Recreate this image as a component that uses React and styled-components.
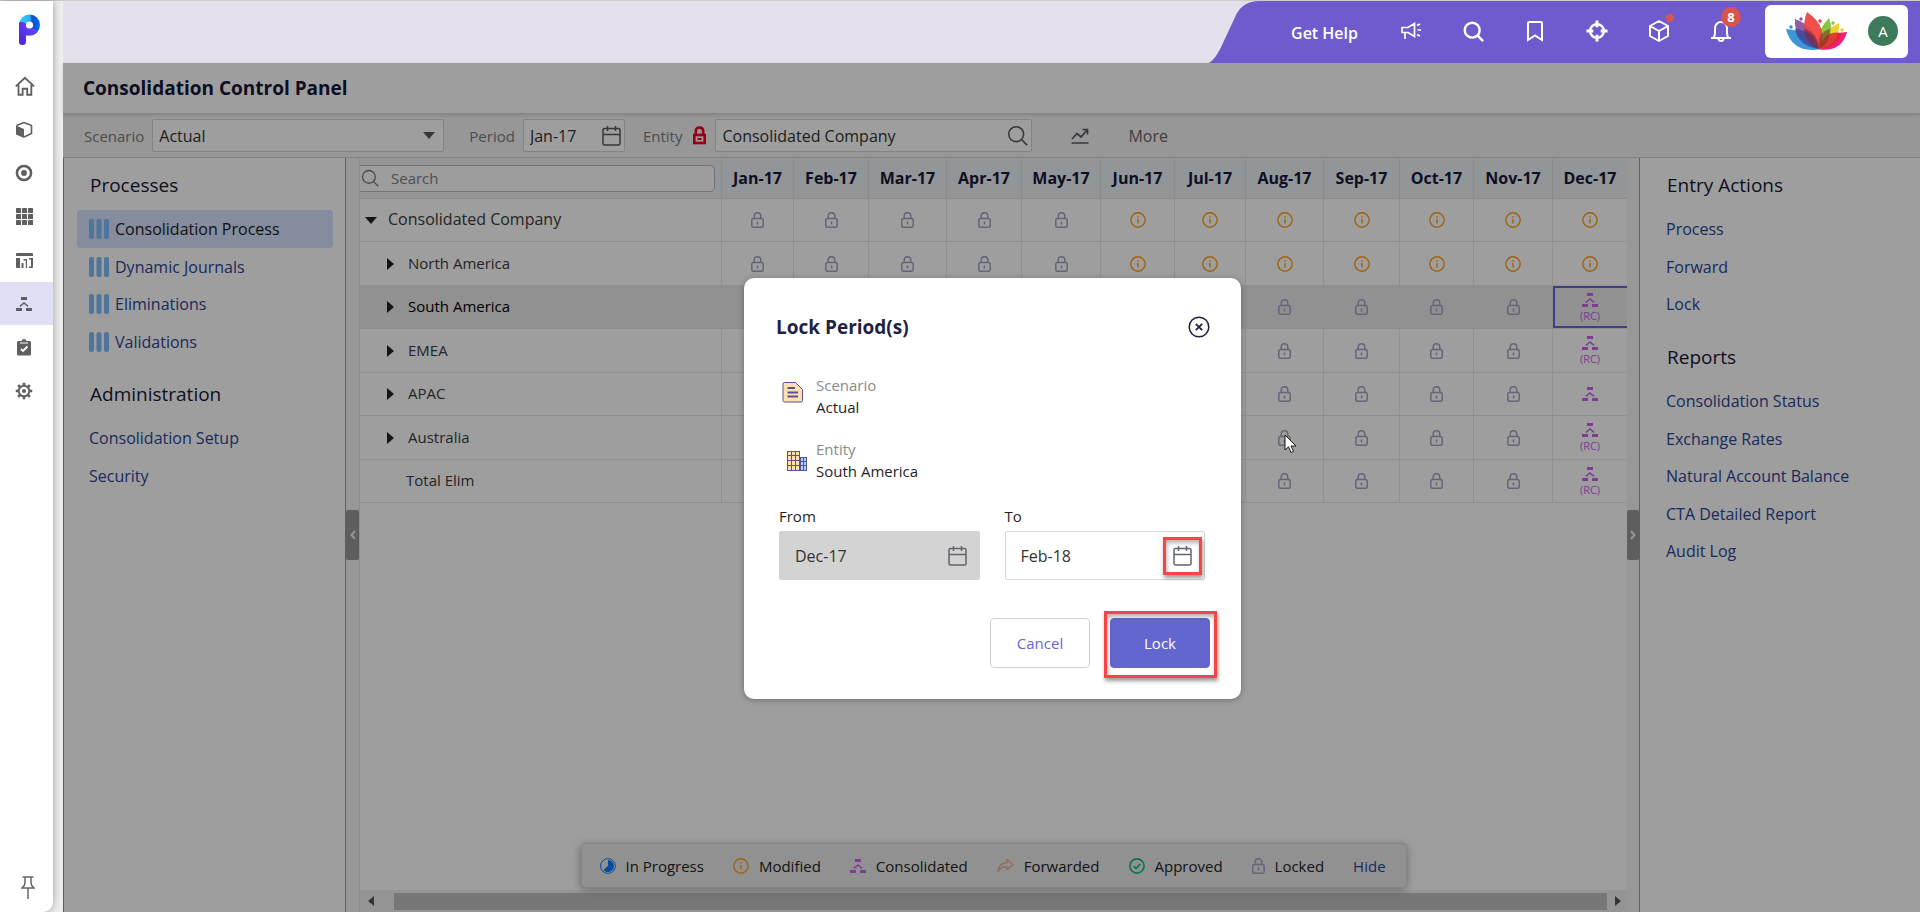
import { useState } from "react";
import styled, { createGlobalStyle, css } from "styled-components";

const GlobalStyle = createGlobalStyle`
  * {
    box-sizing: border-box;
  }
  body {
    margin: 0;
    background: #eeeeee;
    font-family: "Open Sans", "Noto Sans", sans-serif;
    font-size: 15px;
    color: #333333;
  }
  button, input, select {
    font: inherit;
    color: inherit;
  }
  button {
    background: none;
    border: none;
    padding: 0;
    cursor: pointer;
  }
  a {
    text-decoration: none;
  }
  svg {
    display: block;
    flex-shrink: 0;
  }
`;

const Page = styled.div`
  display: flex;
  min-height: 100vh;
  border-top: 1px solid #cccccc;
`;

/* side rail */

const Rail = styled.nav`
  width: 53px;
  display: flex;
  flex-direction: column;
  background: white;
  border-bottom-right-radius: 10px;
  box-shadow: 0 0 8px rgba(0, 0, 0, 0.35);
  z-index: 2;
`;

const Brand = styled.a`
  height: 63px;
  padding: 13px 0 0 19px;
`;

const RailButton = styled.button`
  height: 44px;
  padding-right: 5px;
  display: flex;
  align-items: center;
  justify-content: center;
  color: #5f5f5f;
  background: ${(props) => (props.$active ? "#dfdff5" : "transparent")};

  &:nth-of-type(even) {
    height: 43px;
  }
`;

const PinButton = styled.button`
  margin-top: auto;
  padding: 0 0 13px 21px;
  color: #666666;
`;

const Main = styled.div`
  flex: 1;
  min-width: 0;
  margin-left: 10px;
  display: flex;
  flex-direction: column;
`;

/* top bar */

const TopBar = styled.header`
  height: 62px;
  display: flex;
  justify-content: flex-end;
  background: #e5e0ec;
`;

const TopActions = styled.div`
  display: flex;
  align-items: center;
  padding: 0 12px 2px 32px;
  background: #6f5bce;
  color: white;
`;

const HelpLink = styled.a`
  margin: 4px 22px 0 0;
  font-size: 16px;
  font-weight: 600;
  color: white;
`;

const TopButton = styled.button`
  position: relative;
  width: 62px;
  height: 40px;
  display: flex;
  align-items: center;
  justify-content: center;
`;

const Badge = styled.span`
  position: absolute;
  top: -4px;
  left: 31px;
  width: 20px;
  height: 20px;
  border-radius: 50%;
  background: #d9534f;
  font-size: 13px;
  font-weight: 700;
  line-height: 20px;
`;

const Dot = styled.span`
  position: absolute;
  top: 3px;
  left: 38px;
  width: 8px;
  height: 8px;
  border-radius: 50%;
  background: #d9534f;
`;

const Account = styled.div`
  height: 53px;
  margin-left: 13px;
  padding: 0 10px 0 21px;
  display: flex;
  align-items: center;
  gap: 20px;
  background: white;
  border-radius: 6px;
`;

const Avatar = styled.button`
  width: 30px;
  height: 30px;
  border-radius: 50%;
  background: #3c7a5b;
  color: white;
`;

/* page body */

const Body = styled.div`
  position: relative;
  flex: 1;
  display: flex;
  flex-direction: column;
  background: white;
`;

const TitleBar = styled.div`
  height: 51px;
  padding-left: 20px;
  display: flex;
  align-items: center;
  border-bottom: 1px solid #dadada;
  box-shadow: 0 1px 3px rgba(0, 0, 0, 0.15);
  z-index: 1;
`;

const Title = styled.h1`
  margin: 0;
  font-size: 19px;
  font-weight: 700;
  color: #171738;
`;

const Toolbar = styled.div`
  height: 44px;
  padding-left: 21px;
  display: flex;
  align-items: center;
  background: #f4f4f4;
  border-bottom: 1px solid #d4d4d4;
`;

const ToolLabel = styled.label`
  color: #7c7c7c;
  margin-right: 8px;
`;

const ToolField = styled.div`
  width: ${(props) => props.$width}px;
  height: 33px;
  margin-right: ${(props) => props.$gap}px;
  padding-right: ${(props) => props.$inset || 3}px;
  display: flex;
  align-items: center;
  background: white;
  border: 1px solid #d4d4d4;
  border-radius: 2px;
  color: #555b61;
`;

const controlStyle = css`
  flex: 1;
  width: 100%;
  min-width: 0;
  height: 100%;
  padding: 0 0 0 ${(props) => props.$pad || 6}px;
  border: none;
  outline: none;
  background: transparent;
  font-size: 16px;
  font-weight: 500;
  color: #333333;
`;

const FieldInput = styled.input`
  ${controlStyle}
`;

const FieldSelect = styled.select`
  ${controlStyle}
  appearance: none;
`;

const LockFlag = styled.span`
  margin: 0 9px 0 3px;
`;

const ChartButton = styled.button`
  color: #555b61;
`;

const MoreButton = styled.button`
  margin-left: 39px;
  font-size: 16px;
  color: #666666;
`;

const Columns = styled.div`
  flex: 1;
  display: flex;
`;

const SidePanel = styled.aside`
  width: ${(props) => (props.$side === "left" ? 283 : 281)}px;
  padding-top: 15px;
  padding-left: ${(props) => (props.$side === "left" ? 0 : 1)}px;
  border: 0 solid #989898;
  border-width: ${(props) =>
    props.$side === "left" ? "0 1px 0 1px" : "0 0 0 1px"};
`;

const PanelTitle = styled.h2`
  margin: 0 0 13px 26px;
  line-height: 24px;
  font-size: 19px;
  font-weight: 500;
  color: #171738;

  ul + & {
    margin-top: 22px;
  }
`;

const LinkList = styled.ul`
  list-style: none;
  margin: 0 12px 0 13px;
  padding: 0;
`;

const LinkItem = styled.li`
  height: 38px;
  &:nth-child(even) {
    height: 37px;
  }
`;

const PanelLink = styled.a`
  height: 100%;
  padding-left: 12px;
  display: flex;
  align-items: center;
  gap: 6px;
  border-radius: 4px;
  font-size: 16px;
  font-weight: 500;
  white-space: nowrap;
  color: ${(props) => (props.$active ? "#1a1a1a" : "#2d4497")};
  background: ${(props) => (props.$active ? "#d5e3fd" : "transparent")};
`;

const Gutter = styled.div`
  width: ${(props) => (props.$side === "left" ? 13 : 12)}px;
  display: flex;
  align-items: center;
  background: #f4f4f4;
`;

const GutterHandle = styled.button`
  width: 100%;
  height: 50px;
  display: flex;
  align-items: center;
  justify-content: center;
  background: #989898;
  border-radius: 2px;
  color: #f0f0f0;
`;

/* status grid */

const GridPane = styled.section`
  position: relative;
  flex: 1;
  min-width: 0;
  display: flex;
  flex-direction: column;
  border-left: 1px solid #e4e4e4;
`;

const StatusTable = styled.table`
  width: 100%;
  table-layout: fixed;
  border-collapse: separate;
  border-spacing: 0;
`;

const MonthCol = styled.col`
  width: ${(props) => props.$width}px;
`;

const HeadCell = styled.th`
  height: 41px;
  padding: 0;
  background: #edf2f7;
  border-bottom: 1px solid #e0e2e4;
  border-left: 1px solid #e0e2e4;
  font-size: 16px;
  font-weight: 700;
  color: #171738;

  &:first-child {
    border-left: none;
  }
`;

const SearchBox = styled.div`
  height: 27px;
  margin-right: 6px;
  padding-left: 1px;
  display: flex;
  align-items: center;
  border: 1px solid #b9bcc0;
  border-left: none;
  border-radius: 0 5px 5px 0;
  background: #fdfdfd;
  color: #777777;
`;

const SearchInput = styled.input`
  flex: 1;
  min-width: 0;
  padding: 0 0 0 12px;
  border: none;
  outline: none;
  background: transparent;
  font-size: 15px;
  font-weight: 400;
  &::placeholder {
    color: #808080;
  }
`;

const Row = styled.tr`
  height: 43px;
  background: ${(props) => (props.$selected ? "#eaeaea" : "white")};
  color: ${(props) => (props.$selected ? "#000000" : "#3a3a3a")};

  &:nth-child(even) {
    height: 44px;
  }
`;

const cellLine = css`
  padding: 0;
  border-bottom: 1px solid #e8e8e8;
`;

const NameCell = styled.th`
  ${cellLine}
  padding-bottom: 2px;
  text-align: left;
  font-size: ${(props) => (props.$root ? 16 : 15)}px;
  font-weight: ${(props) => (props.$root ? 500 : 400)};
`;

const NameInner = styled.div`
  display: flex;
  align-items: center;
  padding-left: ${(props) => props.$indent}px;
`;

const Toggle = styled.button`
  width: ${(props) => (props.$open ? 23 : 21)}px;
  padding-top: 2px;
  color: #222222;
`;

const StatusCell = styled.td`
  ${cellLine}
  border-left: 1px solid #e8e8e8;
  box-shadow: ${(props) =>
    props.$selected
      ? "inset 2px 0 #6266e2, inset 0 2px #6266e2, inset 0 -2px #6266e2"
      : "none"};
`;

const Status = styled.div`
  display: flex;
  flex-direction: column;
  align-items: center;
  gap: 3px;
  color: ${(props) => props.$color};
  font-size: 11px;
  line-height: 12px;
`;

const ScrollBar = styled.div`
  height: 22px;
  margin-top: auto;
  padding: 0 6px 0 8px;
  display: flex;
  align-items: center;
  gap: 8px;
  background: #f1f1f1;
  color: #555555;
`;

const ScrollThumb = styled.div`
  flex: 1;
  height: 17px;
  margin-left: 12px;
  background: #c1c1c1;
`;

const Legend = styled.div`
  position: absolute;
  left: 50%;
  bottom: 24px;
  transform: translateX(-50%);
  height: 45px;
  padding: 0 20px 0 18px;
  display: flex;
  align-items: center;
  gap: 29px;
  white-space: nowrap;
  background: #ebebeb;
  border: 1px solid #d6d6d6;
  border-radius: 5px;
  box-shadow: 0 2px 8px rgba(0, 0, 0, 0.3);
  color: #222222;
`;

const LegendItem = styled.span`
  display: flex;
  align-items: center;
  gap: 10px;
`;

const LegendIcon = styled.span`
  color: ${(props) => props.$color};
`;

const HideButton = styled.button`
  color: #2d4497;
`;

/* dialog */

const Overlay = styled.div`
  position: absolute;
  inset: 0;
  padding: 2px 0 0 2px;
  display: flex;
  align-items: center;
  justify-content: center;
  background: rgba(0, 0, 0, 0.38);
  z-index: 3;
`;

const Dialog = styled.div`
  width: 497px;
  padding: 35px 31px 31px 32px;
  background: white;
  border-radius: 10px;
  box-shadow: 0 1px 6px rgba(0, 0, 0, 0.3);
  color: #1f1f1f;
  line-height: 22px;
`;

const DialogHead = styled.div`
  height: 28px;
  margin-bottom: 33px;
  display: flex;
  align-items: center;
  justify-content: space-between;
`;

const DialogTitle = styled.h2`
  margin: 0;
  font-size: 19px;
  font-weight: 700;
  color: #1f1f45;
`;

const CloseButton = styled.button`
  color: #1f1f45;
`;

const Detail = styled.div`
  display: flex;
  align-items: center;
  gap: 2px;
  margin-bottom: 20px;
  padding-left: 6px;
`;

const DetailLabel = styled.div`
  color: #8a8a8a;
`;

const Fields = styled.div`
  display: grid;
  grid-template-columns: repeat(2, minmax(0, 1fr));
  gap: 25px;
  margin-top: 23px;
  padding: 0 5px 0 3px;
`;

const DateLabel = styled.label`
  display: block;
  margin-bottom: 4px;
`;

const DateBox = styled.div`
  height: 49px;
  display: flex;
  align-items: center;
  padding-right: 12px;
  border: 1px solid ${(props) => (props.$disabled ? "#d3d3d3" : "#d6d6d6")};
  border-radius: 2px;
  background: ${(props) => (props.$disabled ? "#d3d3d3" : "white")};
`;

const Mark = styled.span`
  position: relative;
  display: block;

  &::after {
    content: "";
    position: absolute;
    inset: ${(props) => props.$inset};
    border: 3px solid #fb4343;
    box-shadow: 1px 3px 4px rgba(0, 0, 0, 0.4),
      inset 1px 3px 4px rgba(0, 0, 0, 0.3);
    pointer-events: none;
  }
`;

const IconButton = styled.button`
  display: block;
  color: #5f666d;
`;

const DialogActions = styled.div`
  display: flex;
  justify-content: flex-end;
  gap: 20px;
  margin-top: 38px;
`;

const ActionButton = styled.button`
  width: 100px;
  height: 50px;
  border: 1px solid ${(props) => (props.$primary ? "#6366cf" : "#d0d0d0")};
  border-radius: 4px;
  background: ${(props) => (props.$primary ? "#6366cf" : "white")};
  color: ${(props) => (props.$primary ? "white" : "#6862d6")};
  font-weight: ${(props) => (props.$primary ? 500 : 400)};
`;

const Pointer = styled.svg`
  position: absolute;
  left: 1221px;
  top: 371px;
`;

/* icons */

const Stroke = ({ size = 20, w = 2, children, ...rest }) => (
  <svg
    width={size}
    height={size}
    viewBox="0 0 24 24"
    fill="none"
    stroke="currentColor"
    strokeWidth={w}
    aria-hidden="true"
    {...rest}
  >
    {children}
  </svg>
);

const BrandLogo = () => (
  <svg width="21" height="32" viewBox="0 0 21 32" aria-hidden="true">
    <defs>
      <linearGradient id="stem" x1="0" y1="1" x2="1" y2="0">
        <stop offset="0" stopColor="#4a22d8" />
        <stop offset="1" stopColor="#6f4bff" />
      </linearGradient>
      <linearGradient id="bowl" x1="0" y1="0" x2="1" y2="0">
        <stop offset="0" stopColor="#3fd0f5" />
        <stop offset="0.5" stopColor="#27b4f5" />
        <stop offset="0.62" stopColor="#0a4fc4" />
        <stop offset="1" stopColor="#0a6cff" />
      </linearGradient>
    </defs>
    <circle cx="10.500" cy="11" r="10.500" fill="url(#bowl)" />
    <path
      d="M0 9Q1 7 4 8L10 11L18.500 17.800Q15.500 21.500 10.500 21.500H7V28Q7 31 3.500 31Q0 31 0 28Z"
      fill="url(#stem)"
    />
    <circle cx="10.500" cy="11" r="3.600" fill="white" />
  </svg>
);

const HomeIcon = () => (
  <Stroke size={22} w={2}>
    <path d="M3 12.500L13 3L23 12.500M6 10.500V21.500H10.500V15H15.500V21.500H20V10.500" />
  </Stroke>
);

const BoxIcon = () => (
  <svg width="18" height="18" viewBox="0 0 18 18" aria-hidden="true">
    <path
      d="M9 1.500L16.500 4.500V12.500L9 16"
      fill="none"
      stroke="currentColor"
      strokeWidth="1.600"
    />
    <path d="M1.500 4.500L9 1.500" stroke="currentColor" strokeWidth="1.600" />
    <path d="M1 4.500L9 8V17L1 13.500Z" fill="currentColor" />
  </svg>
);

const TargetIcon = () => (
  <Stroke size={20} w={3}>
    <circle cx="12" cy="12" r="8.500" />
    <circle cx="12" cy="12" r="3.500" fill="currentColor" stroke="none" />
  </Stroke>
);

const GridIcon = () => (
  <svg width="17" height="17" viewBox="0 0 17 17" fill="currentColor" aria-hidden="true">
    {[0, 6, 12].map((y) =>
      [0, 6, 12].map((x) => (
        <rect key={`${x}-${y}`} x={x} y={y} width="5" height="5" rx="0.500" />
      ))
    )}
  </svg>
);

const ReportIcon = () => (
  <svg width="17" height="15" viewBox="0 0 17 15" fill="currentColor" aria-hidden="true">
    <path d="M0 1Q0 0 1 0H16Q17 0 17 1V3H0ZM0 5H4V15H1Q0 15 0 14ZM5.500 10H7.500V15H5.500ZM7.500 6H11V15H9.800V7.500H7.500ZM13 5H17V14Q17 15 16 15H13V13.500H15V6.500H13Z" />
  </svg>
);

const TreeIcon = () => (
  <svg width="16" height="14" viewBox="0 0 16 14" fill="currentColor" aria-hidden="true">
    <path d="M5 0H11V3H5ZM0 11H6V14H0ZM10 11H16V14H10Z" />
    <path
      d="M3.800 9.500L8 6L12.200 9.500"
      fill="none"
      stroke="currentColor"
      strokeWidth="1.600"
    />
  </svg>
);

const ClipboardIcon = () => (
  <svg width="14" height="17" viewBox="0 0 14 17" aria-hidden="true">
    <path
      d="M1.500 2H4.500Q5 0 7 0T9.500 2H12.500Q14 2 14 3.500V15Q14 16.500 12.500 16.500H1.500Q0 16.500 0 15V3.500Q0 2 1.500 2Z"
      fill="currentColor"
    />
    <path d="M3 4H11" stroke="white" />
    <path d="M4 10L6 12L10.500 7.500" fill="none" stroke="white" strokeWidth="1.800" />
  </svg>
);

const GearIcon = () => (
  <Stroke size={18} w={2.5}>
    <circle cx="12" cy="12" r="7" />
    <circle cx="12" cy="12" r="1.500" fill="currentColor" />
    <path
      strokeWidth="3.500"
      d="M12 1V5M12 19V23M1 12H5M19 12H23M4.200 4.200L7 7M17 17L19.800 19.800M4.200 19.800L7 17M17 7L19.800 4.200"
    />
  </Stroke>
);

const PinIcon = () => (
  <svg
    width="14"
    height="23"
    viewBox="0 0 14 23"
    fill="none"
    stroke="currentColor"
    strokeWidth="1.500"
    aria-hidden="true"
  >
    <path d="M1.500 1H12.500M4 1V7Q4 9.500 1 12H13Q10 9.500 10 7V1M7 12V23" />
  </svg>
);

const MegaphoneIcon = () => (
  <svg
    width="20"
    height="18"
    viewBox="0 0 20 18"
    fill="none"
    stroke="currentColor"
    strokeWidth="1.700"
    aria-hidden="true"
  >
    <path d="M1 5.500H7L13.500 1.500V14.500L7 10.500H1ZM4 10.500V17M16 3.500L19 2M16.500 8H20M16 12.500L19 14" />
  </svg>
);

const MagnifierIcon = ({ size, w }) => (
  <Stroke size={size} w={w}>
    <circle cx="10.500" cy="10.500" r="8.500" />
    <path d="M16.500 16.500L23 23" />
  </Stroke>
);

const BookmarkIcon = () => (
  <svg
    width="16"
    height="21"
    viewBox="0 0 16 21"
    fill="none"
    stroke="currentColor"
    strokeWidth="2"
    aria-hidden="true"
  >
    <path d="M1 19V2Q1 1 2 1H14Q15 1 15 2V19L8 14.500Z" />
  </svg>
);

const CrosshairIcon = () => (
  <Stroke size={22} w={2.6}>
    <circle cx="12" cy="12" r="7.500" />
    <path strokeWidth="3.200" d="M12 0.500V8M12 16V23.500M0.500 12H8M16 12H23.500" />
  </Stroke>
);

const CubeIcon = () => (
  <Stroke size={24} w={2}>
    <path
      strokeLinejoin="round"
      d="M12 2L21 7V17L12 22L3 17V7ZM3 7L12 12L21 7M12 12V22"
    />
  </Stroke>
);

const BellIcon = () => (
  <Stroke size={24} w={2}>
    <path d="M2 19H22M4.500 19Q6 17 6 14V9A6 6 0 0 1 18 9V14Q18 17 19.500 19M9.500 19.500A2.500 2.500 0 0 0 14.500 19.500" />
  </Stroke>
);

const LotusLogo = () => (
  <svg width="62" height="38" viewBox="0 0 62 38" aria-hidden="true">
    <path d="M0 17Q26 19 33 37.500Q6 41 0 17Z" fill="#3c97d8" />
    <path d="M61 20Q40 21 33 37.500Q56 40 61 20Z" fill="#f0207a" />
    <path d="M53 11Q35 19 33 37Q54 33 53 11Z" fill="#efd02f" />
    <path d="M43 6Q28 22 33 37Q50 25 43 6Z" fill="#86c53c" />
    <path d="M9 7Q7 29 33 37Q32 15 9 7Z" fill="#8253a0" opacity="0.92" />
    <path d="M21 0Q12 22 33 37Q44 16 21 0Z" fill="#f04343" opacity="0.94" />
    <path d="M56 21Q38 18 33 37Q50 36 56 21Z" fill="#d9262e" opacity="0.85" />
    <path d="M9 17Q28 18 33 37Q12 34 9 17Z" fill="#37489a" opacity="0.75" />
    <path d="M18 16Q32 22 33 37Q20 32 18 16Z" fill="#7a2440" opacity="0.6" />
    <path d="M44 17Q31 20 33 37Q44 32 44 17Z" fill="#8a3325" opacity="0.6" />
    <circle cx="5" cy="15" r="1.700" fill="#3a94d8" />
    <circle cx="15" cy="7" r="1.700" fill="#8a56a8" />
    <circle cx="34" cy="9" r="1.700" fill="#ea3f3f" />
    <circle cx="47" cy="11" r="1.700" fill="#86c53c" />
    <circle cx="56" cy="18" r="1.700" fill="#e8c92c" />
  </svg>
);

const CalendarIcon = () => (
  <svg
    width="19"
    height="20"
    viewBox="0 0 19 20"
    fill="none"
    stroke="currentColor"
    strokeWidth="1.500"
    aria-hidden="true"
  >
    <rect x="1" y="2.500" width="17" height="16.500" rx="1.500" />
    <path d="M1 8.500H18M5.500 0V5M13.500 0V5" />
  </svg>
);

const RedLockIcon = () => (
  <svg
    width="13"
    height="19"
    viewBox="0 0 13 19"
    fill="none"
    stroke="#f5001d"
    strokeWidth="2.600"
    aria-hidden="true"
  >
    <path d="M2.800 9V5Q2.800 1.500 6.500 1.500T10.200 5V9" />
    <rect x="1.300" y="9" width="10.400" height="8" />
    <path d="M4.500 13H8.500" strokeWidth="2" />
  </svg>
);

const TrendIcon = () => (
  <svg
    width="18"
    height="16"
    viewBox="0 0 18 16"
    fill="none"
    stroke="currentColor"
    strokeWidth="1.700"
    aria-hidden="true"
  >
    <path d="M1 11L6 5.500L10 9L16 2M11.500 1.500H16.500V6.500M0.500 15H17.500" />
  </svg>
);

const LockIcon = () => (
  <svg
    width="13"
    height="16"
    viewBox="0 0 13 16"
    fill="none"
    stroke="currentColor"
    strokeWidth="1.500"
    aria-hidden="true"
  >
    <rect x="0.800" y="6.500" width="11.400" height="8.800" rx="1.800" />
    <path d="M3.200 6.500V4A3.300 3.300 0 0 1 9.800 4V6.500M6.500 9.500V12.500" />
  </svg>
);

const InfoIcon = () => (
  <svg
    width="16"
    height="16"
    viewBox="0 0 16 16"
    fill="none"
    stroke="currentColor"
    strokeWidth="1.400"
    aria-hidden="true"
  >
    <circle cx="8" cy="8" r="7.200" />
    <path d="M8 7V11.500M8 4.300V5.800" />
  </svg>
);

const ProgressIcon = () => (
  <svg width="16" height="16" viewBox="0 0 16 16" aria-hidden="true">
    <circle cx="8" cy="8" r="7.400" fill="none" stroke="currentColor" />
    <path d="M8 2A6 6 0 1 1 3.500 12L8 8Z" fill="currentColor" />
  </svg>
);

const ForwardIcon = () => (
  <svg
    width="17"
    height="16"
    viewBox="0 0 17 16"
    fill="none"
    stroke="currentColor"
    strokeWidth="1.500"
    aria-hidden="true"
  >
    <path
      strokeLinejoin="round"
      d="M10 1.500L16 6.500L10 11.500V8.500Q3.500 8.500 1 14Q1.500 5 10 4.500Z"
    />
  </svg>
);

const ApprovedIcon = () => (
  <svg
    width="16"
    height="16"
    viewBox="0 0 16 16"
    fill="none"
    stroke="currentColor"
    strokeWidth="1.700"
    aria-hidden="true"
  >
    <circle cx="8" cy="8" r="7.100" />
    <path d="M4.800 8.200L7.200 10.500L11.500 5.800" />
  </svg>
);

const BarsIcon = () => (
  <svg width="20" height="20" viewBox="0 0 20 20" fill="#81bdfa" aria-hidden="true">
    <rect width="5" height="20" rx="2" />
    <rect x="7.500" width="5" height="20" rx="2" />
    <rect x="15" width="5" height="20" rx="2" />
  </svg>
);

const Triangle = ({ dir, w = 11, h = 6 }) => {
  const points = {
    down: `0,0 ${w},0 ${w / 2},${h}`,
    right: `0,0 ${w},${h / 2} 0,${h}`,
    left: `${w},0 0,${h / 2} ${w},${h}`,
  };
  return (
    <svg width={w} height={h} fill="currentColor" aria-hidden="true">
      <polygon points={points[dir]} />
    </svg>
  );
};

const Chevron = ({ d }) => (
  <svg
    width="6"
    height="10"
    viewBox="0 0 6 10"
    fill="none"
    stroke="currentColor"
    strokeWidth="2"
    aria-hidden="true"
  >
    <path d={d} />
  </svg>
);

const CloseIcon = () => (
  <svg
    width="22"
    height="22"
    viewBox="0 0 22 22"
    fill="none"
    stroke="currentColor"
    strokeWidth="1.500"
    aria-hidden="true"
  >
    <circle cx="11" cy="11" r="9.800" />
    <path strokeWidth="1.800" d="M7.800 7.800L14.200 14.200M14.200 7.800L7.800 14.200" />
  </svg>
);

const ScenarioIcon = () => (
  <svg
    width="32"
    height="30"
    viewBox="0 0 32 30"
    stroke="#5d4f95"
    fill="none"
    aria-hidden="true"
  >
    <path
      d="M2.500 1.500H13.500L20.500 8.500V19.500Q20.500 21 19 21H2.500Q1 21 1 19.500V3Q1 1.500 2.500 1.500Z"
      fill="#fce0ae"
    />
    <path d="M5.500 7H13M5.500 11.500H16M5.500 15.500H16" strokeWidth="1.800" />
  </svg>
);

const EntityIcon = () => (
  <svg
    width="32"
    height="30"
    viewBox="0 0 32 30"
    stroke="#5d4f95"
    fill="none"
    aria-hidden="true"
  >
    <rect x="5.500" y="6.500" width="12" height="19" fill="#fce0ae" />
    <rect x="18.500" y="12.500" width="6" height="13" fill="#a9d5f5" />
    <path d="M9.500 6.500V25.500M13.500 6.500V25.500M5.500 10.500H17.500M5.500 15.500H17.500M5.500 20.500H17.500M21.500 12.500V25.500M18.500 16.500H24.500M18.500 20.500H24.500" />
  </svg>
);

/* data */

const railItems = [
  ["Home", HomeIcon],
  ["Models", BoxIcon],
  ["Planning", TargetIcon],
  ["Spreadsheets", GridIcon],
  ["Reports", ReportIcon],
  ["Consolidation", TreeIcon],
  ["Tasks", ClipboardIcon],
  ["Maintenance", GearIcon],
];

const processes = [
  "Consolidation Process",
  "Dynamic Journals",
  "Eliminations",
  "Validations",
];
const administration = ["Consolidation Setup", "Security"];
const entryActions = ["Process", "Forward", "Lock"];
const reports = [
  "Consolidation Status",
  "Exchange Rates",
  "Natural Account Balance",
  "CTA Detailed Report",
  "Audit Log",
];

const months = [
  ["Jan-17", 72],
  ["Feb-17", 75],
  ["Mar-17", 78],
  ["Apr-17", 75],
  ["May-17", 79],
  ["Jun-17", 74],
  ["Jul-17", 71],
  ["Aug-17", 78],
  ["Sep-17", 76],
  ["Oct-17", 74],
  ["Nov-17", 79],
  ["Dec-17", 75],
];

const statuses = {
  progress: { icon: ProgressIcon, color: "#0a7bff", label: "In Progress" },
  modified: { icon: InfoIcon, color: "#ffa01a", label: "Modified" },
  consolidated: { icon: TreeIcon, color: "#cb61f3", label: "Consolidated" },
  forwarded: { icon: ForwardIcon, color: "#e0b4a0", label: "Forwarded" },
  approved: { icon: ApprovedIcon, color: "#13bd75", label: "Approved" },
  locked: { icon: LockIcon, color: "#a1a5c0", label: "Locked" },
};

const mixed = [...Array(5).fill("locked"), ...Array(7).fill("modified")];
const closed = [...Array(11).fill("locked"), "consolidated"];

const entities = [
  { name: "Consolidated Company", root: true, cells: mixed },
  { name: "North America", cells: mixed },
  { name: "South America", cells: closed, rc: true },
  { name: "EMEA", cells: closed, rc: true },
  { name: "APAC", cells: closed },
  { name: "Australia", cells: closed, rc: true },
  { name: "Total Elim", leaf: true, cells: closed, rc: true },
];

const indentOf = (entity) => {
  if (entity.root) return 5;
  return entity.leaf ? 46 : 27;
};

const Links = ({ items, active, bars }) => (
  <LinkList>
    {items.map((item) => (
      <LinkItem key={item}>
        <PanelLink href="#" $active={item === active}>
          {bars && <BarsIcon />}
          {item}
        </PanelLink>
      </LinkItem>
    ))}
  </LinkList>
);

const SideRail = () => (
  <Rail>
    <Brand href="#" aria-label="Start page">
      <BrandLogo />
    </Brand>
    {railItems.map(([name, Icon]) => (
      <RailButton key={name} aria-label={name} $active={name === "Consolidation"}>
        <Icon />
      </RailButton>
    ))}
    <PinButton aria-label="Pin menu">
      <PinIcon />
    </PinButton>
  </Rail>
);

const Header = () => (
  <TopBar>
    <svg width="50" height="62" viewBox="0 0 50 62" aria-hidden="true">
      <path d="M0 62Q7 58 14 42L27 14Q34 0 50 0V62Z" fill="#6f5bce" />
    </svg>
    <TopActions>
      <HelpLink href="#">Get Help</HelpLink>
      <TopButton aria-label="Announcements">
        <MegaphoneIcon />
      </TopButton>
      <TopButton aria-label="Search">
        <MagnifierIcon size={21} w={2.8} />
      </TopButton>
      <TopButton aria-label="Bookmarks">
        <BookmarkIcon />
      </TopButton>
      <TopButton aria-label="Focus">
        <CrosshairIcon />
      </TopButton>
      <TopButton aria-label="Packages">
        <CubeIcon />
        <Dot />
      </TopButton>
      <TopButton aria-label="Notifications">
        <BellIcon />
        <Badge>8</Badge>
      </TopButton>
      <Account>
        <LotusLogo />
        <Avatar>A</Avatar>
      </Account>
    </TopActions>
  </TopBar>
);

const Filters = () => (
  <Toolbar>
    <ToolLabel htmlFor="scenario">Scenario</ToolLabel>
    <ToolField $width={292} $gap={25} $inset={8}>
      <FieldSelect id="scenario" defaultValue="Actual">
        <option>Actual</option>
      </FieldSelect>
      <Triangle dir="down" w={12} h={7} />
    </ToolField>
    <ToolLabel htmlFor="period">Period</ToolLabel>
    <ToolField $width={102} $gap={18}>
      <FieldInput id="period" defaultValue="Jan-17" />
      <CalendarIcon />
    </ToolField>
    <ToolLabel htmlFor="entity">Entity</ToolLabel>
    <LockFlag>
      <RedLockIcon />
    </LockFlag>
    <ToolField $width={317} $gap={39}>
      <FieldInput id="entity" defaultValue="Consolidated Company" />
      <MagnifierIcon size={21} w={1.8} />
    </ToolField>
    <ChartButton aria-label="Trend">
      <TrendIcon />
    </ChartButton>
    <MoreButton>More</MoreButton>
  </Toolbar>
);

const StatusGrid = () => {
  const [showLegend, setShowLegend] = useState(true);

  return (
    <GridPane>
      <StatusTable>
        <colgroup>
          <col />
          {months.map(([month, width]) => (
            <MonthCol key={month} $width={width} />
          ))}
        </colgroup>
        <thead>
          <tr>
            <HeadCell>
              <SearchBox>
                <MagnifierIcon size={18} w={1.8} />
                <SearchInput placeholder="Search" aria-label="Search entities" />
              </SearchBox>
            </HeadCell>
            {months.map(([month]) => (
              <HeadCell key={month}>{month}</HeadCell>
            ))}
          </tr>
        </thead>
        <tbody>
          {entities.map((entity) => {
            const selected = entity.name === "South America";
            return (
              <Row key={entity.name} $selected={selected}>
                <NameCell scope="row" $root={entity.root}>
                  <NameInner $indent={indentOf(entity)}>
                    {!entity.leaf && (
                      <Toggle $open={entity.root} aria-label={`Toggle ${entity.name}`}>
                        {entity.root ? (
                          <Triangle dir="down" w={12} h={7} />
                        ) : (
                          <Triangle dir="right" w={7} h={12} />
                        )}
                      </Toggle>
                    )}
                    {entity.name}
                  </NameInner>
                </NameCell>
                {entity.cells.map((key, i) => {
                  const { icon: Icon, color } = statuses[key];
                  const last = i === entity.cells.length - 1;
                  return (
                    <StatusCell key={months[i][0]} $selected={selected && last}>
                      <Status $color={color}>
                        <Icon />
                        {entity.rc && last && "(RC)"}
                      </Status>
                    </StatusCell>
                  );
                })}
              </Row>
            );
          })}
        </tbody>
      </StatusTable>
      <ScrollBar>
        <Triangle dir="left" w={6} h={10} />
        <ScrollThumb />
        <Triangle dir="right" w={6} h={10} />
      </ScrollBar>
      {showLegend && (
        <Legend>
          {Object.values(statuses).map(({ icon: Icon, color, label }) => (
            <LegendItem key={label}>
              <LegendIcon $color={color}>
                <Icon />
              </LegendIcon>
              {label}
            </LegendItem>
          ))}
          <HideButton onClick={() => setShowLegend(false)}>Hide</HideButton>
        </Legend>
      )}
    </GridPane>
  );
};

const LockDialog = () => {
  const [to, setTo] = useState("Feb-18");

  return (
    <Dialog role="dialog" aria-labelledby="lock-title">
      <DialogHead>
        <DialogTitle id="lock-title">Lock Period(s)</DialogTitle>
        <CloseButton aria-label="Close">
          <CloseIcon />
        </CloseButton>
      </DialogHead>
      <Detail>
        <ScenarioIcon />
        <div>
          <DetailLabel>Scenario</DetailLabel>
          <div>Actual</div>
        </div>
      </Detail>
      <Detail>
        <EntityIcon />
        <div>
          <DetailLabel>Entity</DetailLabel>
          <div>South America</div>
        </div>
      </Detail>
      <Fields>
        <div>
          <DateLabel htmlFor="from">From</DateLabel>
          <DateBox $disabled>
            <FieldInput id="from" $pad={15} value="Dec-17" readOnly />
            <IconButton aria-label="Pick start" disabled>
              <CalendarIcon />
            </IconButton>
          </DateBox>
        </div>
        <div>
          <DateLabel htmlFor="to">To</DateLabel>
          <DateBox>
            <FieldInput
              id="to"
              $pad={15}
              value={to}
              onChange={(e) => setTo(e.target.value)}
            />
            <Mark $inset="-9px -10px">
              <IconButton aria-label="Pick end">
                <CalendarIcon />
              </IconButton>
            </Mark>
          </DateBox>
        </div>
      </Fields>
      <DialogActions>
        <ActionButton>Cancel</ActionButton>
        <Mark $inset="-7px -7px -10px -6px">
          <ActionButton $primary>Lock</ActionButton>
        </Mark>
      </DialogActions>
    </Dialog>
  );
};

const App = () => {
  return (
    <>
      <GlobalStyle />
      <Page>
        <SideRail />
        <Main>
          <Header />
          <Body>
            <TitleBar>
              <Title>Consolidation Control Panel</Title>
            </TitleBar>
            <Filters />
            <Columns>
              <SidePanel $side="left">
                <PanelTitle>Processes</PanelTitle>
                <Links items={processes} active="Consolidation Process" bars />
                <PanelTitle>Administration</PanelTitle>
                <Links items={administration} />
              </SidePanel>
              <Gutter $side="left">
                <GutterHandle aria-label="Collapse processes">
                  <Chevron d="M5 1L1.500 5L5 9" />
                </GutterHandle>
              </Gutter>
              <StatusGrid />
              <Gutter $side="right">
                <GutterHandle aria-label="Collapse actions">
                  <Chevron d="M1 1L4.500 5L1 9" />
                </GutterHandle>
              </Gutter>
              <SidePanel $side="right">
                <PanelTitle>Entry Actions</PanelTitle>
                <Links items={entryActions} />
                <PanelTitle>Reports</PanelTitle>
                <Links items={reports} />
              </SidePanel>
            </Columns>
            <Overlay>
              <LockDialog />
              <Pointer width="14" height="20" viewBox="0 0 14 20" aria-hidden="true">
                <path
                  d="M1 1V16L4.500 12.800L7 18.500L9.500 17.300L7 12H12Z"
                  fill="white"
                  stroke="#1a1a1a"
                />
              </Pointer>
            </Overlay>
          </Body>
        </Main>
      </Page>
    </>
  );
};

export default App;
